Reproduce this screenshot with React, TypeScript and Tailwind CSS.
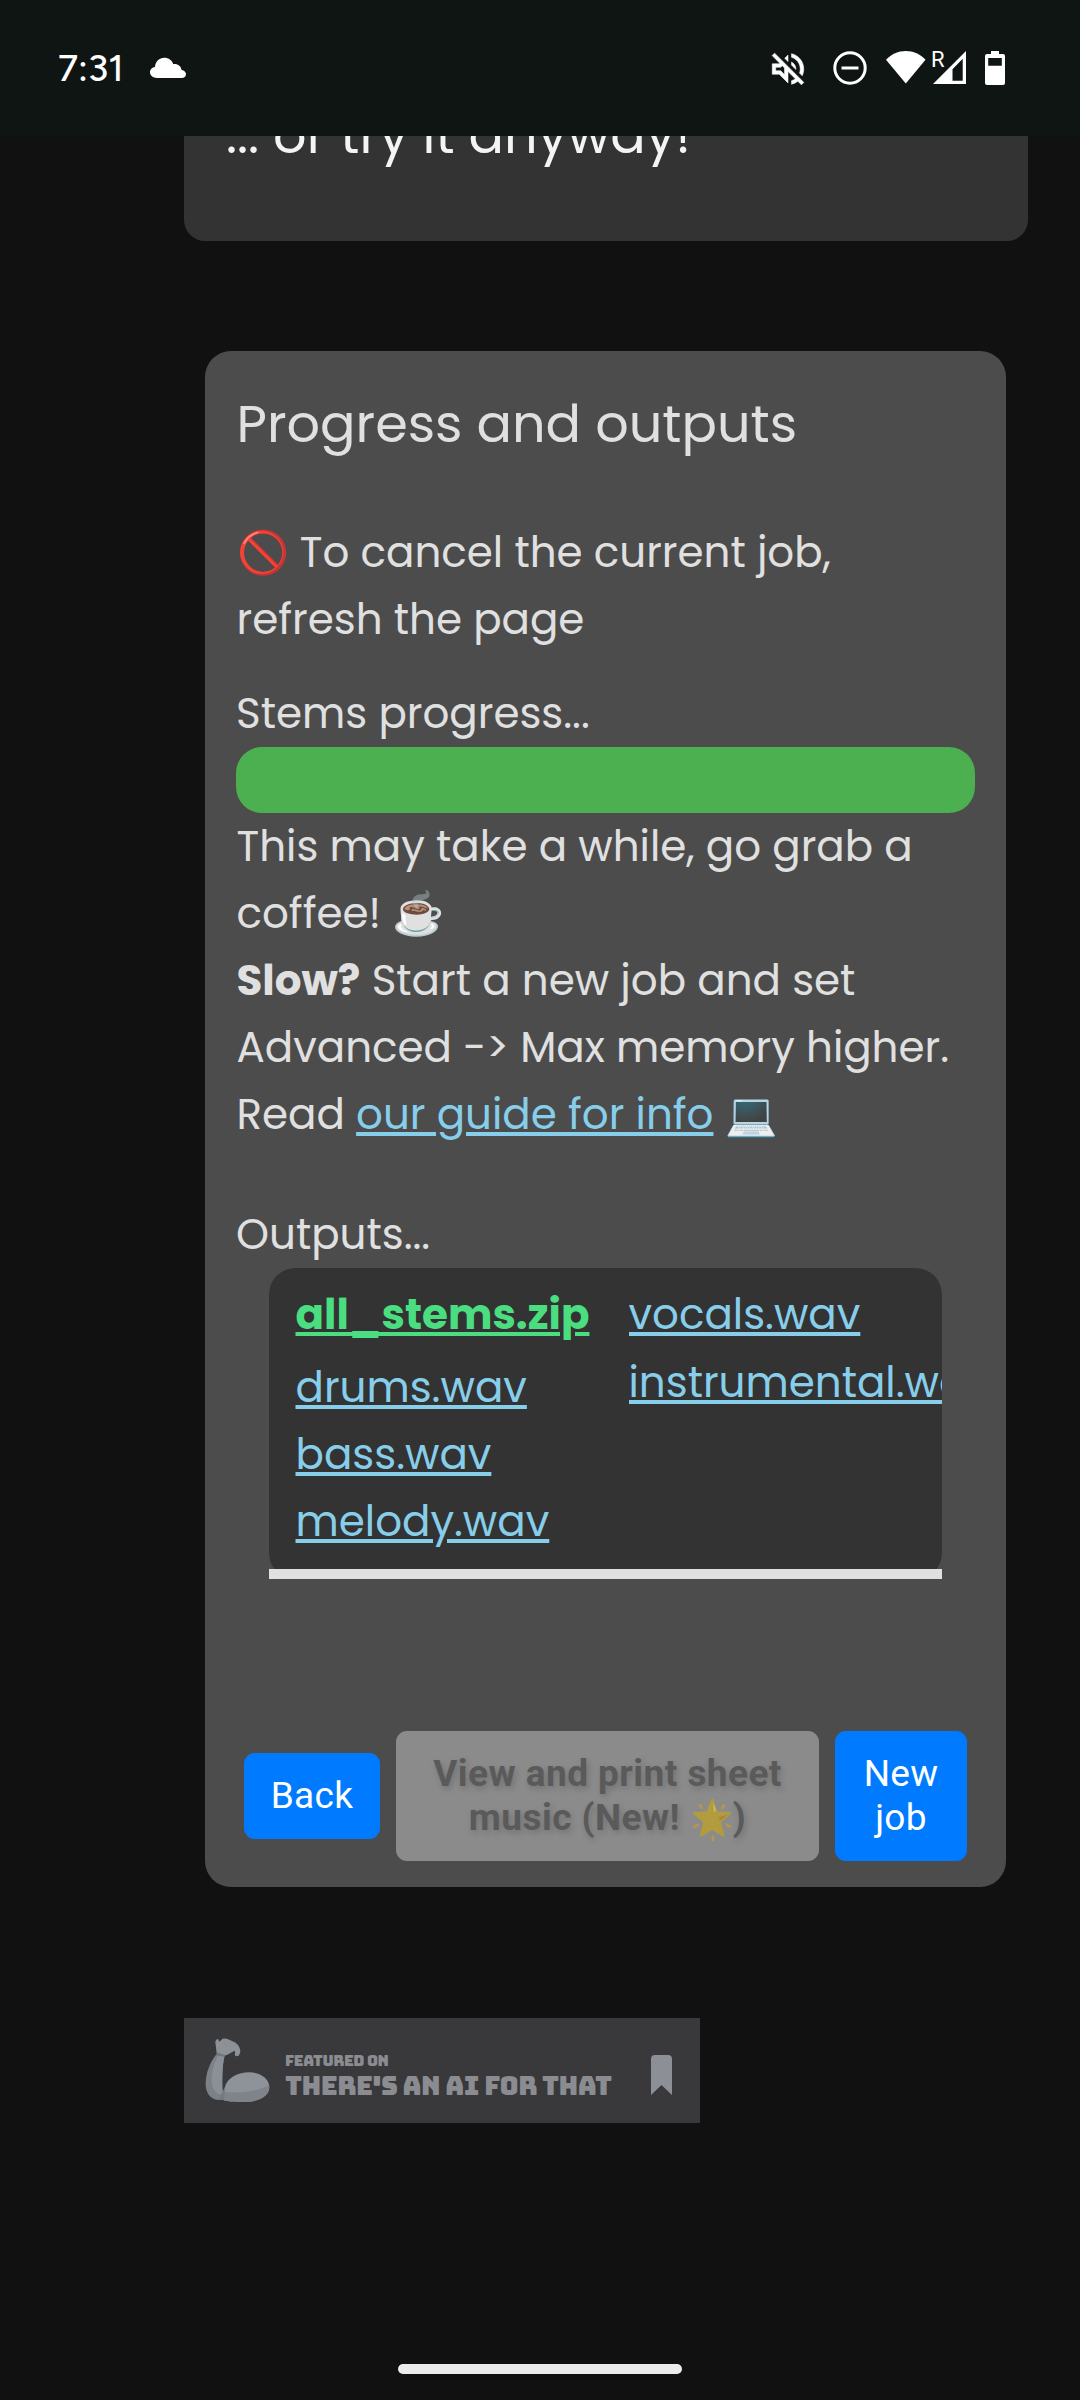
import React from 'react';

function StatusBar() {
  return (
    <header className="relative z-10 flex h-[136px] shrink-0 items-start bg-[#0f1513] pl-[58px] text-white">
      <span className="mt-[43px] w-[92px] font-['Figtree','Poppins',sans-serif] text-[37px] leading-[50px] font-medium">7:31</span>
      <svg className="mt-[57px] h-[22px] w-[36px]" viewBox="0 0 36 22" fill="#fff">
        <path d="M7 21C3 21 0 18.500 0 15.300C0 12.400 2.200 10.200 5 9.900C5.300 4.500 9.300.7 14.300.7C18.700.7 22 3.200 23.300 7.200C27.700 6.600 31 9.200 31.600 13C34.300 13.300 36 15 36 17.200C36 19.500 34.200 21 31.800 21Z" />
      </svg>
      <div className="ml-[581px] flex items-start">
        <svg className="mt-[48px] h-[42px] w-[42px]" viewBox="0 0 24 24" fill="#fff" stroke="#fff" strokeWidth="0.3">
          <path d="M4.340 2.930L2.930 4.340 7.290 8.700 7 9H3v6h4l5 5v-6.590l4.180 4.180c-.65.49-1.380.88-2.180 1.110v2.060c1.340-.3 2.570-.92 3.610-1.750l2.050 2.050 1.410-1.410L4.340 2.930zM10 15.170L7.830 13H5v-2h2.830l.88-.88L10 11.410v3.760zM19 12c0 .82-.15 1.610-.41 2.340l1.530 1.530c.56-1.170.88-2.480.88-3.870 0-4.280-2.990-7.860-7-8.770v2.060c2.890.86 5 3.540 5 6.710zm-7-8l-1.880 1.880L12 7.760zm4.500 8c0-1.770-1.020-3.290-2.500-4.030v1.790l2.480 2.480c.01-.08.02-.16.02-.24z" />
        </svg>
        <svg className="mt-[51px] ml-[24px] h-[34px] w-[34px]" viewBox="0 0 34 34" fill="none" stroke="#fff" strokeWidth="3">
          <circle cx="17" cy="17" r="15.200" />
          <path d="M8.500 17h17" />
        </svg>
        <svg className="mt-[51px] ml-[19px] h-[33px] w-[40px]" viewBox="0 0 40 33" fill="#fff">
          <path d="M0 8.800C5.500 3.200 12.200 0 19.800 0S34.200 3.200 39.500 8.800L19.800 32.600Z" />
        </svg>
        <div className="relative ml-[7px] mt-[51px] h-[34px] w-[33px]">
          <span className="absolute -top-[3px] -left-[2px] font-['Roboto',sans-serif] text-[22px] leading-[24px]">R</span>
          <svg className="h-[33px] w-[33px]" viewBox="0 0 33 33" fill="#fff" fillRule="evenodd">
            <path d="M33 0V33H0ZM29.700 7.800L19.500 18.200V29.700H29.700Z" />
          </svg>
        </div>
        <svg className="mt-[51px] ml-[19px] h-[34px] w-[20px]" viewBox="0 0 20 34" fill="#fff" fillRule="evenodd">
          <path d="M6 0H14V3H18A2 2 0 0 1 20 5V32A2 2 0 0 1 18 34H2A2 2 0 0 1 0 32V5A2 2 0 0 1 2 3H6ZM3.200 7V14.700H16.800V7Z" />
        </svg>
      </div>
    </header>
  );
}

function FileLink({ name }: { name: string }) {
  return (
    <a className="block whitespace-nowrap text-[#87ceeb] underline decoration-[4px] underline-offset-[3px]">{name}</a>
  );
}

function StarIcon() {
  return (
    <svg className="-my-[6px] ml-px inline-block h-[44px] w-[42px] align-middle" viewBox="0 0 126 132">
      <g stroke="#b29a4c" strokeWidth="8" strokeLinecap="round">
        <path d="M27 22L33 30M99 22L93 30M10 86L20 81M118 86L108 81M66 116V126" />
      </g>
      <path
        d="M64 4L78 42L118 45L87 72L98 114L64 93L29 114L39 72L8 45L49 42Z"
        fill="#b39c3d"
        stroke="#b39c3d"
        strokeWidth="5"
        strokeLinejoin="round"
      />
      <path d="M66 14L75 37L69 42Z" fill="#c9bd7b" />
      <path d="M112 48L86 69L84 58Z" fill="#a9863c" />
    </svg>
  );
}

function Badge() {
  return (
    <div className="ml-[184px] mt-[131px] flex h-[105px] w-[516px] shrink-0 bg-[#39393b] text-[#8b8c91]">
      <svg className="mt-[7px] ml-[6px] h-[90px] w-[100px] shrink-0" viewBox="0 0 300 270">
        <path d="M78 89C60 112 47 145 47 176C47 206 62 221 84 225L104 221L100 208C96 170 96 120 104 93Z" fill="#7c8189" />
        <path d="M83 92C67 125 61 160 68 184C74 204 86 211 96 207C96 165 97 122 103 94Z" fill="#8b9097" />
        <path d="M80 84L76 52C76 46 80 42 84 42L88 50L98 41C108 38 118 44 130 50C142 54 151 66 151 80C149 91 144 95 136 93C133 88 137 82 134 77C122 82 113 90 103 92Z" fill="#8d9196" />
        <path d="M80 82L104 90L103 95L79 90Z" fill="#70757e" />
        <path d="M104 188C111 159 143 142 178 142C211 142 236 160 238 184C240 212 208 231 160 231C132 231 105 230 95 223L95 208Z" fill="#8e9299" />
        <path d="M102 201C146 205 195 202 237 181C241 211 210 231 162 231C130 231 106 230 96 223Z" fill="#7f848c" />
        <path d="M94 207L106 185L102 225L88 225Z" fill="#747982" />
      </svg>
      <div className="flex flex-col font-['Bungee','Inter',sans-serif] leading-none whitespace-nowrap">
        <span className="mt-[35px] -ml-[5px] text-[15px] leading-[16px] tracking-[-0.45px]">FEATURED ON</span>
        <span className="mt-[3px] -ml-[5px] text-[26px] leading-[27px] tracking-[-0.55px]">THERE'S AN AI FOR THAT</span>
      </div>
      <svg className="mt-[36px] ml-auto mr-[28px] h-[42px] w-[21px]" viewBox="0 0 21 42" fill="#8c9096">
        <path d="M0 41V5Q0 1 4 1H17Q21 1 21 5V41L10.500 31Z" />
      </svg>
    </div>
  );
}

export default function App() {
  return (
    <div className="flex h-[2400px] w-[1080px] flex-col overflow-hidden bg-[#111111] font-['Poppins','Inter',sans-serif] text-[42px] leading-[67.2px] text-[#e0e0e0]">
      <StatusBar />

      <section className="ml-[184px] h-[105px] w-[844px] shrink-0 rounded-b-[21px] bg-[#333333] pl-[42px]">
        <p className="-mt-[38px] text-[52.5px] leading-[73.5px] whitespace-nowrap text-[#f4f4f4]">... or try it anyway!</p>
      </section>

      <main className="ml-[205px] mt-[110px] flex h-[1536px] w-[801px] shrink-0 flex-col rounded-[26px] bg-[#4c4c4c] px-[31px] pt-[39px]">
        <h2 className="pl-[0.5px] text-[52.5px] leading-[67px]">Progress and outputs</h2>

        <p className="mt-[61.500px] pl-[0.5px]">
          🚫 To cancel the current job,
          <br />
          refresh the page
        </p>

        <p className="mt-[27px]">Stems progress...</p>
        <div className="h-[66px] shrink-0 rounded-[26px] bg-[#4caf50]" />
        <p className="pl-[0.5px] leading-[67px] whitespace-nowrap">
          This may take a while, go grab a
          <br />
          coffee! <span className="font-['Noto_Color_Emoji']">☕️</span>
          <br />
          <b>Slow?</b> Start a new job and set
          <br />
          Advanced -&gt; Max memory higher.
          <br />
          Read <a className="text-[#87ceeb] underline decoration-[4px] underline-offset-[3px]">our guide for info</a> 💻
        </p>

        <p className="mt-[52.500px]">Outputs...</p>
        <div className="mx-[33px] flex h-[311px] shrink-0 flex-col">
          <div className="flex h-[301px] shrink-0 overflow-hidden rounded-t-[26px]">
            <div className="flex h-[311px] w-full shrink-0 rounded-[26px] bg-[#333333] pt-[13.200px] pl-[26.500px]">
              <div className="w-[333px] shrink-0">
                <a className="mb-[5.500px] block font-bold text-[#4ade80] underline decoration-[4px] underline-offset-[3px]">all_stems.zip</a>
                <FileLink name="drums.wav" />
                <FileLink name="bass.wav" />
                <FileLink name="melody.wav" />
              </div>
              <div className="flex min-w-0 flex-1 flex-col gap-[0.5px] overflow-hidden">
                <FileLink name="vocals.wav" />
                <FileLink name="instrumental.wav" />
              </div>
            </div>
          </div>
          <div className="h-[10px] shrink-0 bg-[#e0e0e0]" />
        </div>

        <div className="mt-[152px] flex items-center justify-center gap-[16px] font-['Roboto',sans-serif] text-[37px] leading-[44px] tracking-[0.3px] text-white">
          <button className="h-[86px] w-[136px] shrink-0 rounded-[11px] bg-[#007bff]">Back</button>
          <button className="h-[130px] w-[423px] shrink-0 rounded-[11px] bg-[#8b8b8b] font-bold tracking-[0.45px] text-[#5a5a5a] [text-shadow:2px_3px_6px_rgba(0,0,0,0.18)]">
            View and print sheet
            <br />
            music (New! <StarIcon />)
          </button>
          <button className="h-[130px] w-[132px] shrink-0 rounded-[11px] bg-[#007bff]">
            New
            <br />
            job
          </button>
        </div>
      </main>

      <Badge />

      <div className="mx-auto mt-[241px] h-[10px] w-[284px] shrink-0 rounded-full bg-[#ececec]" />
    </div>
  );
}
